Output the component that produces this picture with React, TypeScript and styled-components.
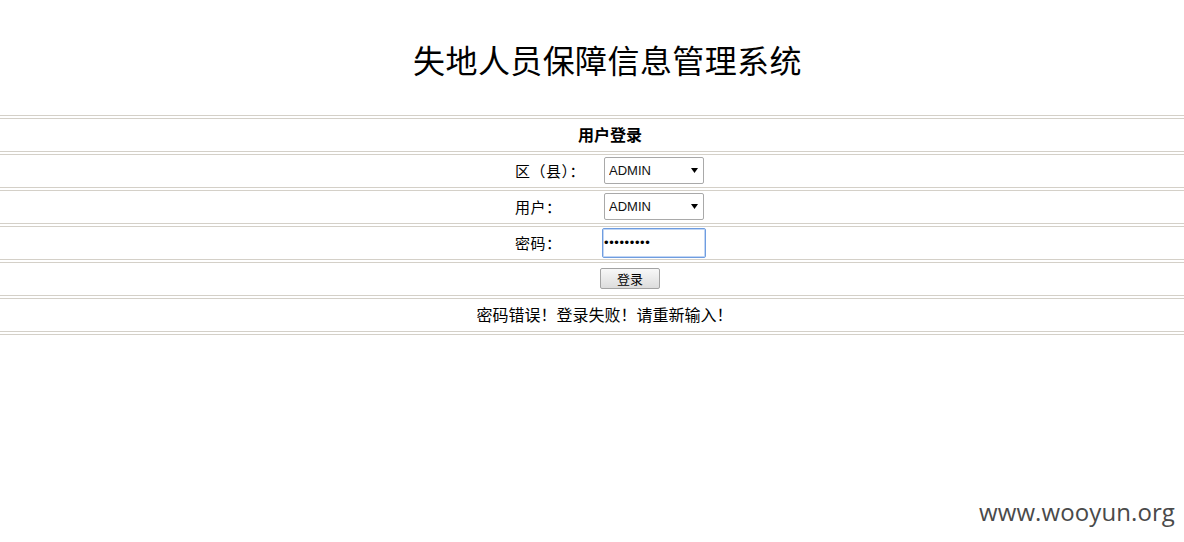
import { createGlobalStyle, styled } from "styled-components";

const GlobalStyle = createGlobalStyle`
  html, body {
    margin: 0;
    padding: 0;
    background: #ffffff;
  }
  body {
    font-family: "Liberation Sans", "Noto Sans CJK SC", sans-serif;
    color: #000;
  }
`;

const LINE = "#d4d0c8";

const Page = styled.div`
  position: relative;
  min-height: 542px;
  overflow: hidden;
`;

const Title = styled.h1`
  margin: 39px 0 36px;
  padding-left: 31px;
  font-family: "Noto Sans CJK SC", serif;
  font-size: 32px;
  font-weight: normal;
  line-height: 40px;
  text-align: center;
  letter-spacing: 0.4px;
`;

const Board = styled.div`
  display: flex;
  flex-direction: column;
  gap: 2px;
  padding: 2px 0;
  border-top: 1px solid ${LINE};
  border-bottom: 1px solid ${LINE};
`;

const Row = styled.div<{ $shift?: number }>`
  display: flex;
  align-items: center;
  justify-content: center;
  height: 32px;
  padding-left: ${p => p.$shift ?? 0}px;
  border-top: 1px solid ${LINE};
  border-bottom: 1px solid ${LINE};
  font-family: "Noto Sans CJK SC", sans-serif;
  font-size: 16px;
  line-height: 20px;
`;

const Heading = styled.span`
  font-size: 16px;
  font-weight: bold;
  margin-top: -2px;
`;

const Message = styled.span`
  margin-top: -2px;
`;

const Field = styled.div`
  display: grid;
  grid-template-columns: 89px 104px;
  align-items: center;
  margin-left: 39px;
  margin-top: -1px;
`;

const Label = styled.label`
  font-size: 15px;
  white-space: nowrap;
  letter-spacing: 0.5px;
`;

const SelectWrap = styled.div`
  position: relative;
  width: 100px;
  height: 27px;
`;

const Select = styled.select`
  appearance: none;
  width: 100%;
  height: 100%;
  box-sizing: border-box;
  margin: 0;
  padding: 0 0 0 4px;
  border: 1px solid #a9a9a9;
  border-radius: 2px;
  background: #fff;
  font-family: "Liberation Sans", Arial, sans-serif;
  font-size: 13px;
  color: #111;
  outline: none;
`;

const Arrow = styled.svg`
  position: absolute;
  right: 6px;
  top: 11px;
  pointer-events: none;
`;

const Password = styled.input`
  width: 104px;
  height: 30px;
  box-sizing: border-box;
  margin: 0 0 0 -2px;
  padding: 0 0 0 1px;
  border: 1px solid #6f9de0;
  border-radius: 2px;
  box-shadow: inset 0 0 0 1px #c2d6f4;
  font-family: "Liberation Sans", Arial, sans-serif;
  font-size: 13px;
  letter-spacing: 0.6px;
  outline: none;
`;

const Button = styled.button`
  width: 60px;
  height: 21px;
  margin-left: -4px;
  padding: 0;
  border: 1px solid #a3a3a3;
  border-radius: 2px;
  background: linear-gradient(#f8f8f8, #dcdcdc);
  font-family: "Noto Sans CJK SC", sans-serif;
  font-size: 13px;
  line-height: 19px;
  color: #000;
  cursor: pointer;
`;

const Watermark = styled.div`
  position: absolute;
  right: 9px;
  bottom: 14px;
  font-family: "Open Sans", sans-serif;
  font-size: 24px;
  letter-spacing: 0.1px;
  color: #4a4a4a;
`;

function Dropdown({ value }: { value: string }) {
  return (
    <SelectWrap>
      <Select defaultValue={value}>
        <option value={value}>{value}</option>
      </Select>
      <Arrow width="7" height="5" viewBox="0 0 7 5">
        <path d="M0 0H7L3.5 5Z" fill="#000" />
      </Arrow>
    </SelectWrap>
  );
}

export default function App() {
  return (
    <Page>
      <GlobalStyle />
      <Title>失地人员保障信息管理系统</Title>
      <Board>
        <Row $shift={36}>
          <Heading>用户登录</Heading>
        </Row>
        <Row>
          <Field>
            <Label>区（县）：</Label>
            <Dropdown value="ADMIN" />
          </Field>
        </Row>
        <Row>
          <Field>
            <Label>用户：</Label>
            <Dropdown value="ADMIN" />
          </Field>
        </Row>
        <Row>
          <Field>
            <Label>密码：</Label>
            <Password type="password" defaultValue="123456789" />
          </Field>
        </Row>
        <Row>
          <Field>
            <span />
            <Button>登录</Button>
          </Field>
        </Row>
        <Row $shift={25}>
          <Message>密码错误！登录失败！请重新输入！</Message>
        </Row>
      </Board>
      <Watermark>www.wooyun.org</Watermark>
    </Page>
  );
}
